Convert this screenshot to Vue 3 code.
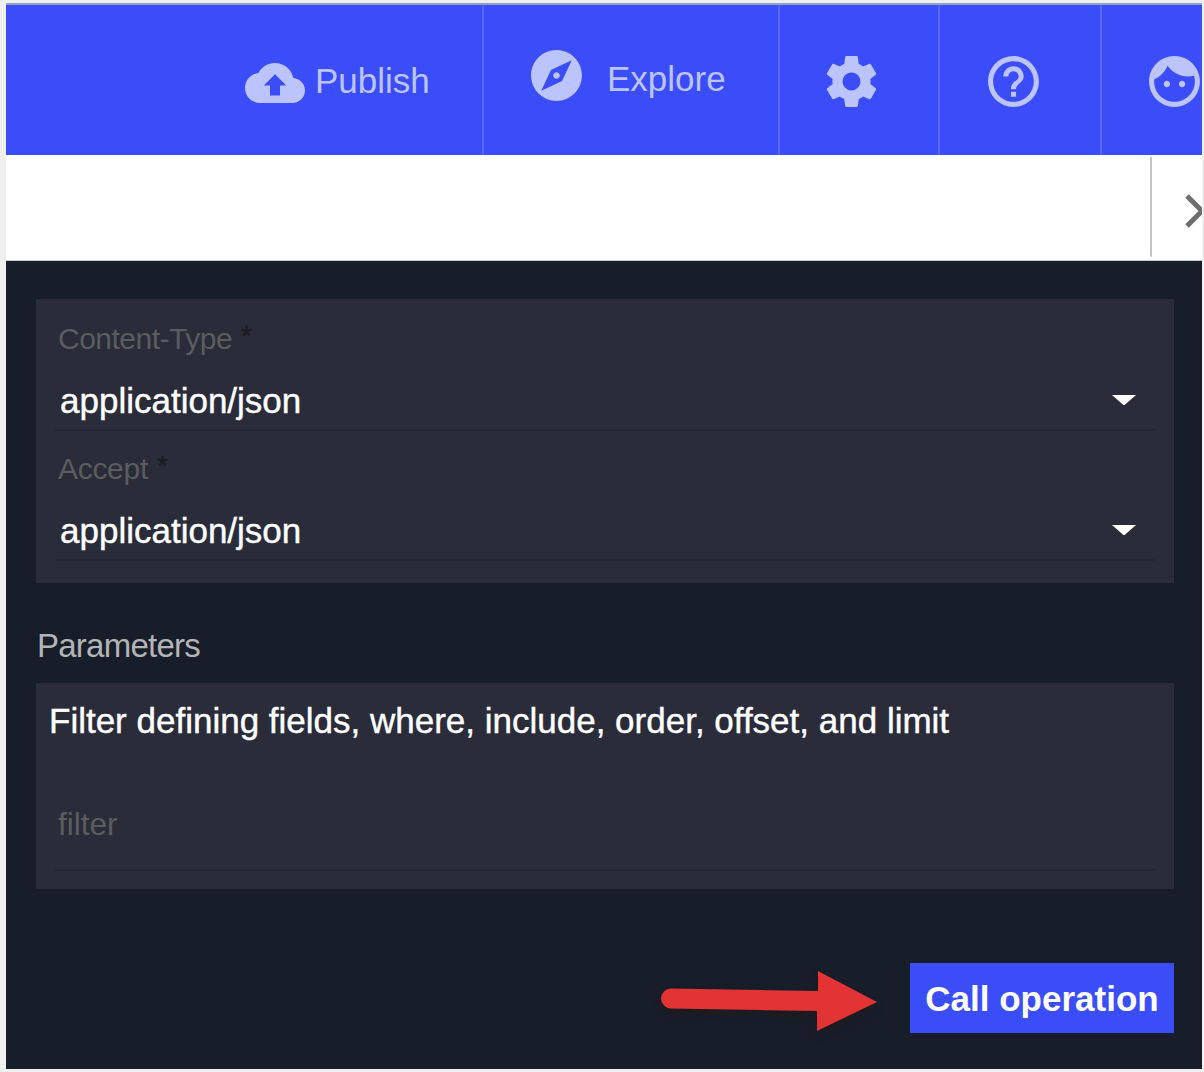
<script setup>
const headers = [
  { label: 'Content-Type', value: 'application/json', cls: 'content-type' },
  { label: 'Accept', value: 'application/json', cls: 'accept' },
]
</script>

<template>
  <div class="frame">
    <div class="screen">
      <header class="topbar">
        <div class="cell publish">
          <svg class="cloud" viewBox="0 0 24 24"><path d="M19.35 10.04C18.67 6.59 15.64 4 12 4 9.11 4 6.6 5.64 5.35 8.04 2.34 8.36 0 10.91 0 14c0 3.31 2.69 6 6 6h13c2.76 0 5-2.24 5-5 0-2.64-2.05-4.78-4.65-4.96zM14 13v4h-4v-4H7.5L12 8.5l4.5 4.5H14z" /></svg>
          <span>Publish</span>
        </div>
        <div class="cell explore">
          <svg viewBox="0 0 24 24"><path d="M12 10.7c-.72 0-1.300.58-1.300 1.300s.58 1.300 1.300 1.300c.72 0 1.300-.58 1.300-1.300s-.58-1.300-1.300-1.300zM12 2C6.480 2 2 6.480 2 12s4.480 10 10 10 10-4.480 10-10S17.520 2 12 2zm2.190 12.190L6 18l3.810-8.190L18 6l-3.810 8.190z" /></svg>
          <span>Explore</span>
        </div>
        <div class="cell settings">
          <svg viewBox="0 0 24 24"><path d="M19.430 12.980c.04-.32.07-.64.07-.98s-.03-.66-.07-.98l2.110-1.650c.19-.15.24-.42.12-.64l-2-3.460c-.12-.22-.39-.3-.61-.22l-2.490 1c-.52-.4-1.080-.73-1.690-.98l-.38-2.650C14.460 2.180 14.250 2 14 2h-4c-.25 0-.46.18-.49.42l-.38 2.650c-.61.25-1.170.59-1.690.98l-2.490-1c-.23-.09-.49 0-.61.22l-2 3.460c-.13.22-.07.49.12.64l2.110 1.650c-.04.32-.07.65-.07.98s.03.66.07.98l-2.110 1.650c-.19.15-.24.42-.12.64l2 3.460c.12.22.39.3.61.22l2.490-1c.52.4 1.080.73 1.690.98l.38 2.650c.03.24.24.42.49.42h4c.25 0 .46-.18.49-.42l.38-2.650c.61-.25 1.170-.59 1.690-.98l2.490 1c.23.09.49 0 .61-.22l2-3.460c.12-.22.07-.49-.12-.64l-2.110-1.650zM12 15.500c-1.930 0-3.500-1.570-3.500-3.500s1.570-3.500 3.500-3.500 3.500 1.570 3.500 3.500-1.570 3.500-3.500 3.500z" /></svg>
        </div>
        <div class="cell help">
          <svg viewBox="0 0 24 24"><path d="M11 18h2v-2h-2v2zm1-16C6.480 2 2 6.480 2 12s4.480 10 10 10 10-4.480 10-10S17.520 2 12 2zm0 18c-4.410 0-8-3.590-8-8s3.590-8 8-8 8 3.590 8 8-3.590 8-8 8zm0-14c-2.210 0-4 1.790-4 4h2c0-1.100.9-2 2-2s2 .9 2 2c0 2-3 1.750-3 5h2c0-2.250 3-2.500 3-5 0-2.210-1.790-4-4-4z" /></svg>
        </div>
        <div class="cell user">
          <svg viewBox="0 0 24 24"><path d="M9 11.750c-.69 0-1.250.56-1.250 1.250s.56 1.250 1.250 1.250 1.250-.56 1.250-1.250-.56-1.250-1.250-1.250zm6 0c-.69 0-1.250.56-1.250 1.250s.56 1.250 1.250 1.250 1.250-.56 1.250-1.250-.56-1.250-1.250-1.250zM12 2C6.480 2 2 6.480 2 12s4.480 10 10 10 10-4.480 10-10S17.520 2 12 2zm0 18c-4.410 0-8-3.590-8-8 0-.29.02-.58.05-.86 2.360-1.050 4.230-2.980 5.210-5.370C11.070 8.330 14.050 10 17.420 10c.78 0 1.530-.09 2.250-.26.21.71.33 1.470.33 2.260 0 4.410-3.590 8-8 8z" /></svg>
        </div>
      </header>

      <div class="tabs">
        <div class="next">
          <svg viewBox="0 0 24 40"><path d="M2 5l15 15-15 15" /></svg>
        </div>
      </div>

      <main class="panel">
        <section class="card headers">
          <div v-for="h in headers" :key="h.label" class="field">
            <div class="label" :class="h.cls"><span>{{ h.label }}</span><span class="star">*</span></div>
            <div class="select">
              <span>{{ h.value }}</span>
              <svg viewBox="0 0 24 10"><path d="M0 0h24L12 10.500z" /></svg>
            </div>
          </div>
        </section>
        <h2>Parameters</h2>
        <section class="card params">
          <p>Filter defining fields, where, include, order, offset, and limit</p>
          <div class="input">filter</div>
        </section>
        <div class="actions">
          <button>Call operation</button>
        </div>
      </main>
    </div>
    <svg class="arrow" viewBox="0 0 240 80">
      <path d="M21 28.500L168 31V11L227 42 167 71V51L21 48.500a10 10 0 0 1 0-20z" />
    </svg>
  </div>
</template>

<style>
body {
  margin: 0;
  background: #efefef;
}
</style>

<style scoped>
.frame {
  position: relative;
  box-sizing: border-box;
  width: 1204px;
  height: 1072px;
  padding: 3px 2px 3px 6px;
  background: #efefef;
  font-family: "Liberation Sans", Arial, sans-serif;
  overflow: hidden;
}
.screen {
  display: flex;
  flex-direction: column;
  height: 1066px;
  overflow: hidden;
}
.topbar {
  display: flex;
  flex: none;
  box-sizing: border-box;
  height: 152px;
  border-top: 2px solid #8fa3c4;
  background: #3b4cf9;
  color: #bcc4fd;
  font-size: 35px;
  line-height: 40px;
}
.cell {
  display: flex;
  flex: none;
  align-items: center;
  box-sizing: border-box;
  border-right: 2px solid #5868fa;
}
.cell svg {
  flex: none;
  width: 61px;
  height: 61px;
  fill: currentColor;
}
.publish {
  width: 478px;
  padding-left: 239px;
}
.cell .cloud {
  width: 60px;
  height: 60px;
  margin-top: 6px;
}
.publish span {
  margin: 2px 0 0 10px;
}
.explore {
  width: 296px;
  padding-left: 42px;
}
.explore svg {
  margin-top: -10px;
}
.explore span {
  margin: -2px 0 0 20px;
}
.settings {
  width: 160px;
  padding: 2px 0 0 41px;
}
.help {
  width: 162px;
  padding: 2px 0 0 43px;
}
.user {
  width: 102px;
  padding: 2px 0 0 42px;
  border-right: 0;
}
.tabs {
  display: flex;
  flex: none;
  justify-content: flex-end;
  box-sizing: border-box;
  height: 106px;
  padding: 2px 0 3px;
  border-bottom: 1px solid #c9ccce;
  background: #fff;
}
.next {
  box-sizing: border-box;
  width: 52px;
  padding: 34px 0 0 33px;
  border-left: 2px solid #c3c3c3;
  border-bottom-left-radius: 2px;
  overflow: hidden;
}
.next svg {
  display: block;
  width: 24px;
  height: 40px;
  fill: none;
  stroke: #706e6d;
  stroke-width: 5;
}
.panel {
  flex: 1;
  padding: 38px 28px 0 30px;
  background: #181d2a;
}
.card {
  box-sizing: border-box;
  padding: 0 19px 0 18px;
  background: #2a2c3a;
}
.headers {
  height: 284px;
  padding-top: 2px;
}
.field {
  box-sizing: border-box;
  height: 130px;
  padding: 20px 0 0 4px;
  border-bottom: 2px solid #252733;
}
.label {
  display: flex;
  height: 36px;
  color: #5b5c5e;
  font-size: 30px;
  line-height: 36px;
}
.content-type {
  letter-spacing: -0.5px;
}
.accept {
  letter-spacing: -0.3px;
}
.star {
  margin: -3px 0 0 9px;
  color: #1b1c24;
  font-size: 28px;
  -webkit-text-stroke: 0.5px currentColor;
}
.select {
  display: flex;
  align-items: center;
  justify-content: space-between;
  margin-top: 24px;
  padding: 0 19px 0 2px;
  color: #fff;
  font-size: 35px;
  line-height: 40px;
  -webkit-text-stroke: 0.4px currentColor;
}
.select svg {
  width: 24px;
  height: 10px;
  margin-top: -2px;
  fill: #fff;
}
h2 {
  margin: 43px 0 18px 1px;
  color: #b3b4b5;
  font-size: 33px;
  font-weight: 400;
  line-height: 39px;
  letter-spacing: -0.75px;
}
.params {
  height: 206px;
  padding-top: 18px;
}
.params p {
  margin: 0 0 0 -5px;
  color: #fff;
  font-size: 35px;
  line-height: 40px;
  white-space: nowrap;
  -webkit-text-stroke: 0.4px currentColor;
}
.input {
  box-sizing: border-box;
  height: 86px;
  margin-top: 44px;
  padding-left: 4px;
  border-bottom: 2px solid #252733;
  color: #5b5c5e;
  font-size: 31.5px;
  line-height: 78px;
}
.actions {
  display: flex;
  justify-content: flex-end;
  margin-top: 74px;
}
button {
  width: 264px;
  height: 70px;
  padding: 2px 0 0;
  border: 0;
  background: #3b4cf9;
  color: #fff;
  font: bold 35px/40px "Liberation Sans", Arial, sans-serif;
}
.arrow {
  position: absolute;
  left: 650px;
  top: 960px;
  width: 240px;
  height: 80px;
  fill: #e23335;
  filter: drop-shadow(0 5px 3px rgba(30, 26, 28, 0.8));
}
</style>
